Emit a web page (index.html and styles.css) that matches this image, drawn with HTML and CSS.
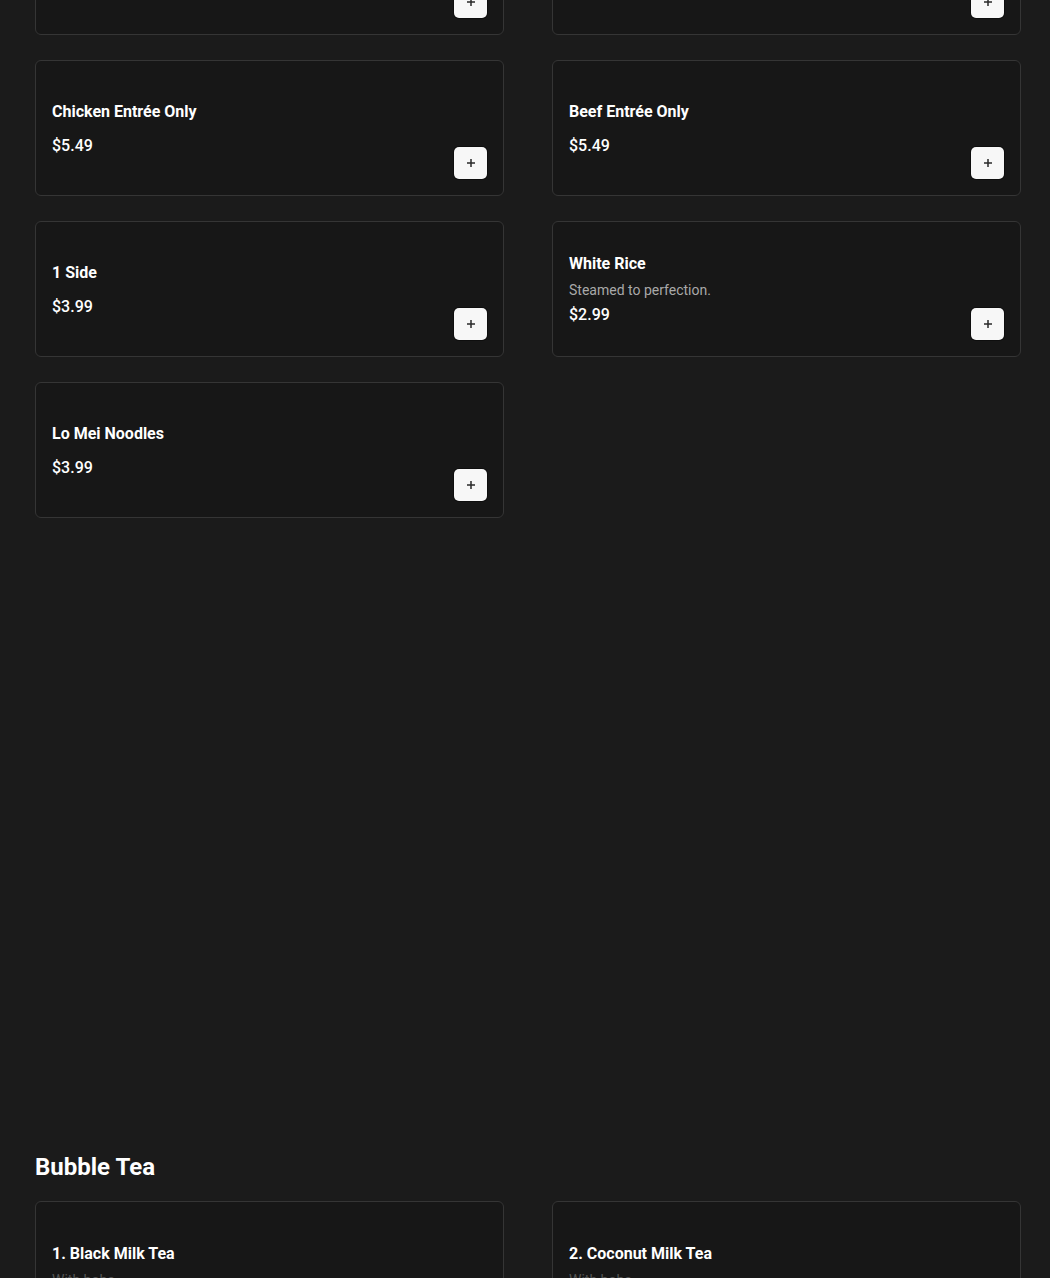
FILE: index.html
```html
<!DOCTYPE html>
<html>
<head>
    <meta charset="utf-8" />
    <title>Menu</title>
    <link rel="stylesheet" href="styles.css">
</head>
<body>
    <main class="menu">
        <section class="menu-section">
            <div class="item-grid">
                <div class="item-card">
                    <div class="item-info">
                        <div class="item-name">Orange Chicken Plate</div>
                        <div class="item-price">$5.49</div>
                    </div>
                    <button class="add-btn"><svg viewBox="0 0 10 10" width="10" height="10"><path d="M5 1v8M1 5h8" /></svg></button>
                </div>
                <div class="item-card">
                    <div class="item-info">
                        <div class="item-name">Kung Pao Plate</div>
                        <div class="item-price">$5.49</div>
                    </div>
                    <button class="add-btn"><svg viewBox="0 0 10 10" width="10" height="10"><path d="M5 1v8M1 5h8" /></svg></button>
                </div>
                <div class="item-card">
                    <div class="item-info">
                        <div class="item-name">Chicken Entrée Only</div>
                        <div class="item-price">$5.49</div>
                    </div>
                    <button class="add-btn"><svg viewBox="0 0 10 10" width="10" height="10"><path d="M5 1v8M1 5h8" /></svg></button>
                </div>
                <div class="item-card">
                    <div class="item-info">
                        <div class="item-name">Beef Entrée Only</div>
                        <div class="item-price">$5.49</div>
                    </div>
                    <button class="add-btn"><svg viewBox="0 0 10 10" width="10" height="10"><path d="M5 1v8M1 5h8" /></svg></button>
                </div>
                <div class="item-card">
                    <div class="item-info">
                        <div class="item-name">1 Side</div>
                        <div class="item-price">$3.99</div>
                    </div>
                    <button class="add-btn"><svg viewBox="0 0 10 10" width="10" height="10"><path d="M5 1v8M1 5h8" /></svg></button>
                </div>
                <div class="item-card">
                    <div class="item-info">
                        <div class="item-name">White Rice</div>
                        <div class="item-desc">Steamed to perfection.</div>
                        <div class="item-price">$2.99</div>
                    </div>
                    <button class="add-btn"><svg viewBox="0 0 10 10" width="10" height="10"><path d="M5 1v8M1 5h8" /></svg></button>
                </div>
                <div class="item-card">
                    <div class="item-info">
                        <div class="item-name">Lo Mei Noodles</div>
                        <div class="item-price">$3.99</div>
                    </div>
                    <button class="add-btn"><svg viewBox="0 0 10 10" width="10" height="10"><path d="M5 1v8M1 5h8" /></svg></button>
                </div>
            </div>
        </section>

        <section class="menu-section">
            <h2 class="section-title">Bubble Tea</h2>
            <div class="item-grid">
                <div class="item-card tall">
                    <div class="item-info">
                        <div class="item-name">1. Black Milk Tea</div>
                        <div class="item-desc dim">With boba.</div>
                        <div class="item-price">$4.99</div>
                    </div>
                    <button class="add-btn"><svg viewBox="0 0 10 10" width="10" height="10"><path d="M5 1v8M1 5h8" /></svg></button>
                </div>
                <div class="item-card tall">
                    <div class="item-info">
                        <div class="item-name">2. Coconut Milk Tea</div>
                        <div class="item-desc dim">With boba.</div>
                        <div class="item-price">$4.99</div>
                    </div>
                    <button class="add-btn"><svg viewBox="0 0 10 10" width="10" height="10"><path d="M5 1v8M1 5h8" /></svg></button>
                </div>
            </div>
        </section>
    </main>
</body>
</html>
```

FILE: styles.css
```css
:root {
	--page-bg: #1b1b1b;
	--card-bg: #171717;
	--card-border: #353535;
	--radius: 6px;
}

body {
	margin: 0;
	background: var(--page-bg);
	color: #fff;
	font-family: Roboto, "Liberation Sans", Arial, sans-serif;
}

.menu {
	/* page is shown scrolled: first row is cut at the top */
	margin-top: -101px;
	padding: 0 30px 0 35px;
}

.menu-section + .menu-section {
	margin-top: 633px;
}

.section-title {
	margin: 0 0 18px;
	font-size: 24px;
	line-height: 32px;
	font-weight: 700;
}

.item-grid {
	display: grid;
	grid-template-columns: 469px 469px;
	column-gap: 48px;
	row-gap: 25px;
}

.item-card {
	box-sizing: border-box;
	height: 136px;
	display: flex;
	align-items: center;
	justify-content: space-between;
	padding: 16px;
	background: var(--card-bg);
	border: 1px solid var(--card-border);
	border-radius: var(--radius);
}

.item-card.tall {
	height: 155px;
}

.item-info {
	padding-top: 2px;
}

.item-name {
	font-size: 16px;
	line-height: 22px;
	font-weight: 700;
}

.item-desc {
	margin-top: 5px;
	font-size: 14px;
	line-height: 20px;
	color: #a9a9a9;
}

.item-desc.dim {
	color: #555;
}

.item-price {
	margin-top: 11px;
	font-size: 16px;
	line-height: 24px;
	font-weight: 500;
}

.item-desc + .item-price {
	margin-top: 3px;
}

.add-btn {
	align-self: flex-end;
	width: 33px;
	height: 32px;
	padding: 0;
	display: flex;
	align-items: center;
	justify-content: center;
	background: #f7f7f7;
	border: none;
	border-radius: 5px;
	box-shadow: 0 0 0 1px #0e0e0e;
	cursor: pointer;
}

.add-btn svg path {
	stroke: #2a2a2a;
	stroke-width: 1.5;
	fill: none;
}
```
